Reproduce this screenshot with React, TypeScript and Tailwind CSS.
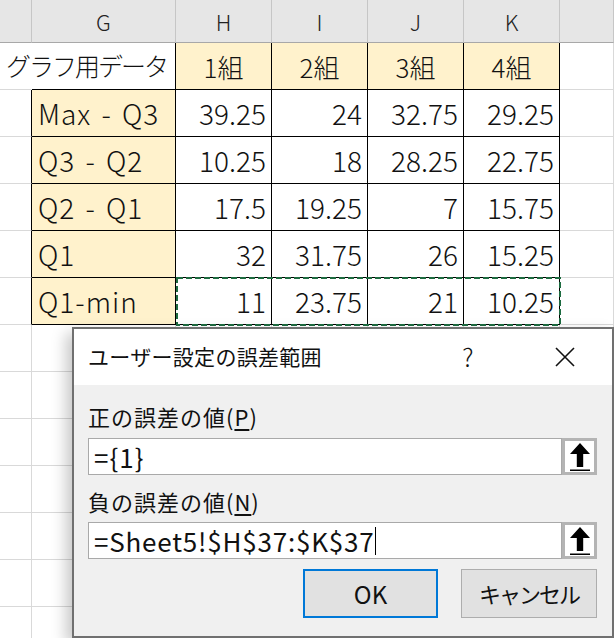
import React from "react";

const font = "font-['Noto_Sans_CJK_JP',sans-serif]";

const heads = ["", "G", "H", "I", "J", "K", ""];
const groups = ["1組", "2組", "3組", "4組"];
const data = [
  ["Max - Q3", "39.25", "24", "32.75", "29.25"],
  ["Q3 - Q2", "10.25", "18", "28.25", "22.75"],
  ["Q2 - Q1", "17.5", "19.25", "7", "15.75"],
  ["Q1", "32", "31.75", "26", "15.25"],
  ["Q1-min", "11", "23.75", "21", "10.25"],
];

// black-bordered block: row 1 H..K, rows 2..6 G..K
const inBox = (r: number, c: number) =>
  (r === 1 && c >= 2 && c <= 5) || (r >= 2 && r <= 6 && c >= 1 && c <= 5);

function Cell({ r, c }: { r: number; c: number }) {
  const right = r === 1 && c === 0 ? "border-r-transparent" : inBox(r, c) || inBox(r, c + 1) ? "border-r-black" : "border-r-[#d9d9d9]";
  const bottom = inBox(r, c) || inBox(r + 1, c) ? "border-b-black" : "border-b-[#d9d9d9]";
  const yellow = (r === 1 && c >= 2 && c <= 5) || (r >= 2 && r <= 6 && c === 1);
  let content: React.ReactNode = null;
  let align = "justify-end pr-[5px]";
  if (r === 1 && c === 1) {
    content = <span className="text-[25px] tracking-[-2px] whitespace-nowrap">グラフ用データ</span>;
    align = "justify-end pr-[8px]";
  } else if (r === 1 && c >= 2 && c <= 5) {
    content = <span className="text-[26px]">{groups[c - 2]}</span>;
    align = "justify-center";
  } else if (r >= 2 && r <= 6 && c === 1) {
    content = <span className="text-[28px] tracking-[1px] [word-spacing:3px] whitespace-nowrap">{data[r - 2][0]}</span>;
    align = "justify-start pl-[6px]";
  } else if (r >= 2 && r <= 6 && c >= 2 && c <= 5) {
    content = <span className="text-[28px]">{data[r - 2][c - 1]}</span>;
  }
  return (
    <div className={`h-[47px] flex items-center border-r border-b ${right} ${bottom} ${align} ${yellow ? "bg-[#fff2cc]" : "bg-white"} text-[#111] font-light`}>
      {content}
    </div>
  );
}

function UpButton() {
  return (
    <div className="w-[35px] h-[37px] border-[3px] border-[#b4b4b4] bg-white flex items-center justify-center">
      <svg width="22" height="30" viewBox="0 0 22 30">
        <path d="M11 1 L21 12 L14.2 12 L14.2 25 L7.8 25 L7.8 12 L1 12 Z" fill="#000" />
        <rect x="1" y="27.5" width="20" height="1.5" fill="#000" />
      </svg>
    </div>
  );
}

export default function App() {
  return (
    <div className={`relative w-[614px] h-[638px] overflow-hidden bg-white ${font}`}>
      <div className="grid grid-cols-[32px_144px_96px_96px_96px_96px_54px]">
        {heads.map((h, i) => (
          <div key={i} className="h-[43px] bg-[#e6e6e6] border-r border-b border-r-[#c6c6c6] border-b-[#a8a8a8] flex items-center justify-center text-[22px] text-[#222] font-light">
            {h}
          </div>
        ))}
        {Array.from({ length: 13 }).map((_, ri) =>
          Array.from({ length: 7 }).map((_, c) => <Cell key={`${ri}-${c}`} r={ri + 1} c={c} />)
        )}
      </div>

      {/* copy marquee */}
      <svg className="absolute left-[176px] top-[277px]" width="385" height="49">
        <rect x="1" y="1" width="383" height="47" fill="none" stroke="#1d6b40" strokeWidth="2" strokeDasharray="6 3" />
      </svg>

      {/* dialog */}
      <div className="absolute left-[72px] top-[327px] w-[542px] h-[311px] border-2 border-[#707070] bg-[#f0f0f0] shadow-[-6px_6px_14px_rgba(0,0,0,0.22)] flex flex-col">
        <div className="h-[56px] bg-white flex items-center pl-[14px] text-[21px] tracking-[0.3px] text-[#111]">
          <span className="flex-1">ユーザー設定の誤差範囲</span>
          <span className="text-[25px] font-light w-[20px] text-center mr-[76px]">?</span>
          <svg width="22" height="22" viewBox="0 0 22 22" className="mr-[36px]">
            <path d="M2 2 L20 20 M20 2 L2 20" stroke="#111" strokeWidth="1.6" />
          </svg>
        </div>
        <div className="flex flex-col pl-[14px] pr-[15px] text-[#111]">
          <div className="h-[32px] mt-[15px] mb-[6px] flex items-center text-[22px] tracking-[1px]">
            正の誤差の値(<span className="underline underline-offset-[3px]">P</span>)
          </div>
          <div className="flex">
            <div className="flex-1 h-[37px] border border-[#a9a9a9] bg-white flex items-center pl-[5px] text-[26px] tracking-[1px]">={"{"}1{"}"}</div>
            <UpButton />
          </div>
          <div className="h-[32px] mt-[10px] mb-[5px] flex items-center text-[22px] tracking-[1px]">
            負の誤差の値(<span className="underline underline-offset-[3px]">N</span>)
          </div>
          <div className="flex">
            <div className="flex-1 h-[37px] border border-[#a9a9a9] bg-white flex items-center pl-[5px] text-[26px] tracking-[0.8px]">
              =Sheet5!$H$37:$K$37<span className="inline-block w-[1px] h-[28px] bg-black ml-[1px]" />
            </div>
            <UpButton />
          </div>
          <div className="flex justify-end mt-[10px] gap-[23px]">
            <div className="w-[135px] h-[49px] border-2 border-[#0078d7] bg-[#e1e1e1] flex items-center justify-center text-[24px]">OK</div>
            <div className="w-[136px] h-[49px] border border-[#adadad] bg-[#e1e1e1] flex items-center justify-center text-[22px] tracking-[-2px]">キャンセル</div>
          </div>
        </div>
      </div>
    </div>
  );
}
